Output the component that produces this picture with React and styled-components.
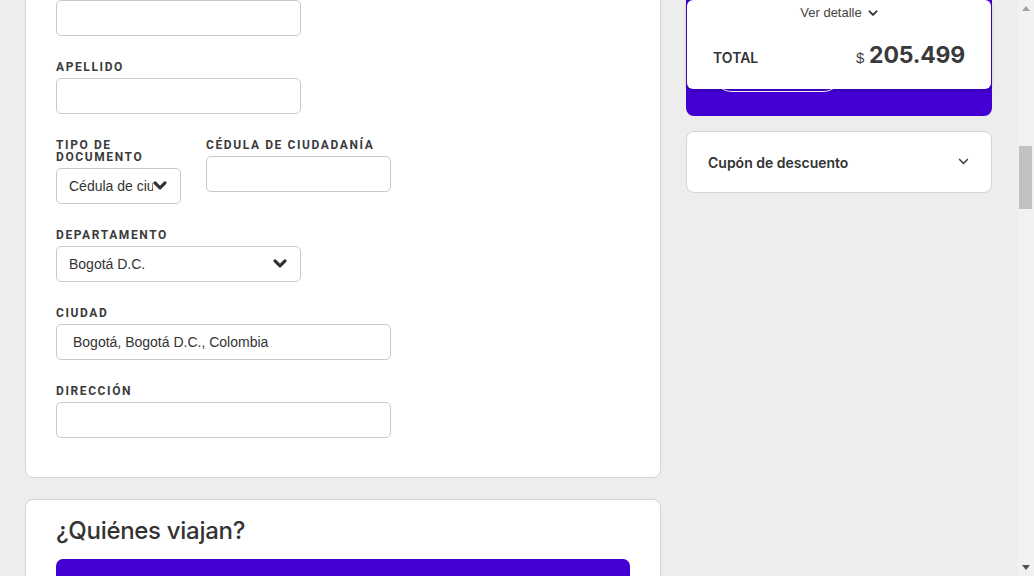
import React from "react";
import styled, { createGlobalStyle } from "styled-components";

const Global = createGlobalStyle`
  html, body { margin: 0; padding: 0; }
  body {
    background: #ededed;
    font-family: Inter, "Noto Sans", sans-serif;
    color: #333;
    overflow: hidden;
  }
`;

const Screen = styled.div`
  display: flex;
  height: 576px;
  overflow: hidden;
`;

const Viewport = styled.div`
  flex: 1;
  overflow: hidden;
`;

const Columns = styled.div`
  display: grid;
  grid-template-columns: 636px 306px;
  column-gap: 25px;
  padding: 0 25px;
  margin-top: -49px;
  align-items: start;
`;

const LeftColumn = styled.div`
  display: flex;
  flex-direction: column;
  gap: 21px;
`;

const Card = styled.section`
  background: #fff;
  border: 1px solid #d4d4d4;
  border-radius: 8px;
`;

const FormCard = styled(Card)`
  padding: 30px 30px 39px;
  display: flex;
  flex-direction: column;
  gap: 24px;
`;

const FieldRow = styled.div`
  display: flex;
  align-items: flex-start;
  gap: 25px;
`;

const Field = styled.div`
  width: ${(p) => p.$w}px;
  display: flex;
  flex-direction: column;
`;

const Label = styled.label`
  font-family: Roboto, "Liberation Sans", sans-serif;
  font-weight: 700;
  font-size: 12px;
  line-height: 12px;
  letter-spacing: 1.6px;
  color: #3b3b3b;
  padding-top: 1px;
  margin-bottom: 5px;
  text-transform: uppercase;
`;

const InputBox = styled.div`
  box-sizing: border-box;
  height: 36px;
  border: 1px solid #c9c9c9;
  border-radius: 5px;
  background: #fff;
  display: flex;
  align-items: center;
  padding: 0 ${(p) => (p.$select ? 13 : 16)}px 0 ${(p) => (p.$select ? 12 : 16)}px;
  font-family: "Liberation Sans", Arial, sans-serif;
  font-size: 14px;
  color: #333;
`;

const BoxText = styled.span`
  flex: 1;
  overflow: hidden;
  white-space: nowrap;
`;

const Chevron = ({ size = 14, stroke = 3.2, color = "#333" }) => (
  <svg width={size} height={size * 0.65} viewBox="0 0 14 9" fill="none">
    <polyline
      points="2,1.8 7,6.8 12,1.8"
      stroke={color}
      strokeWidth={stroke}
      strokeLinecap="round"
      strokeLinejoin="round"
    />
  </svg>
);

const TravelersCard = styled(Card)`
  padding: 17px 30px 0;
  height: 120px;
`;

const Heading = styled.h2`
  margin: 0 0 14px;
  font-family: Inter, "Noto Sans", sans-serif;
  font-weight: 500;
  font-size: 24px;
  line-height: 28px;
  letter-spacing: -0.3px;
  color: #333;
`;

const PurpleBar = styled.div`
  height: 60px;
  background: #4400d3;
  border-radius: 7px;
`;

const RightColumn = styled.aside`
  display: flex;
  flex-direction: column;
  gap: 15px;
`;

const PayCard = styled.div`
  background: #4400d3;
  border-radius: 8px;
  padding: 49px 1px 24px;
  display: flex;
  flex-direction: column;
`;

const Summary = styled.div`
  position: relative;
  z-index: 1;
  box-sizing: border-box;
  height: 89px;
  background: #fff;
  border-radius: 6px;
  box-shadow: 0 1px 4px rgba(0, 0, 0, 0.25);
  padding: 5px 26px 0;
  display: flex;
  flex-direction: column;
`;

const DetailToggle = styled.div`
  align-self: center;
  display: flex;
  align-items: center;
  gap: 6px;
  font-family: "Liberation Sans", Arial, sans-serif;
  font-size: 13px;
  line-height: 16px;
  color: #444;
`;

const TotalRow = styled.div`
  margin-top: 20px;
  display: flex;
  justify-content: space-between;
  align-items: baseline;
`;

const TotalLabel = styled.span`
  font-family: Inter, sans-serif;
  font-weight: 600;
  font-size: 14px;
  color: #333;
`;

const Amount = styled.span`
  font-family: Inter, sans-serif;
  font-weight: 700;
  font-size: 23px;
  color: #3a3a3a;
  letter-spacing: -0.2px;
`;

const Currency = styled.span`
  font-family: "Liberation Sans", Arial, sans-serif;
  font-weight: 400;
  font-size: 15px;
  margin-right: 5px;
  color: #444;
`;

const GhostButton = styled.div`
  box-sizing: border-box;
  margin: -37px 0 0 25px;
  width: 131px;
  height: 40px;
  border: 1px solid #fff;
  border-radius: 20px;
`;

const CouponCard = styled(Card)`
  box-sizing: border-box;
  height: 62px;
  padding: 0 22px 0 21px;
  display: flex;
  align-items: center;
  justify-content: space-between;
`;

const CouponTitle = styled.span`
  font-family: Inter, sans-serif;
  font-weight: 600;
  font-size: 14px;
  color: #333;
`;

const Scrollbar = styled.div`
  width: 17px;
  background: #f1f1f1;
  display: flex;
  flex-direction: column;
`;

const ScrollArrow = styled.div`
  height: 17px;
  display: flex;
  align-items: center;
  justify-content: center;
`;

const Track = styled.div`
  flex: 1;
  padding-top: 129px;
`;

const Thumb = styled.div`
  margin: 0 2px;
  height: 63px;
  background: #c1c1c1;
`;

const Tri = ({ up }) => (
  <svg width="8" height="5" viewBox="0 0 8 5">
    <polygon points={up ? "0,5 8,5 4,0" : "0,0 8,0 4,5"} fill={up ? "#a3a3a3" : "#505050"} />
  </svg>
);

function TextField({ label, width, value, select }) {
  return (
    <Field $w={width}>
      {label && <Label>{label}</Label>}
      <InputBox $select={select}>
        <BoxText>{value}</BoxText>
        {select && <Chevron />}
      </InputBox>
    </Field>
  );
}

const HiddenLabelSpace = styled.div`
  height: 18px;
`;

export default function App() {
  return (
    <>
      <Global />
      <Screen>
        <Viewport>
          <Columns>
            <LeftColumn>
              <FormCard>
                <Field $w={245}>
                  <HiddenLabelSpace aria-label="Nombre" />
                  <InputBox />
                </Field>
                <TextField label="Apellido" width={245} />
                <FieldRow>
                  <TextField label="Tipo de documento" width={125} value="Cédula de ciu" select />
                  <TextField label="Cédula de ciudadanía" width={185} />
                </FieldRow>
                <TextField label="Departamento" width={245} value="Bogotá D.C." select />
                <TextField label="Ciudad" width={335} value="Bogotá, Bogotá D.C., Colombia" />
                <TextField label="Dirección" width={335} />
              </FormCard>
              <TravelersCard>
                <Heading>¿Quiénes viajan?</Heading>
                <PurpleBar />
              </TravelersCard>
            </LeftColumn>
            <RightColumn>
              <PayCard>
                <Summary>
                  <DetailToggle>
                    Ver detalle
                    <Chevron size={10} stroke={2.6} />
                  </DetailToggle>
                  <TotalRow>
                    <TotalLabel>TOTAL</TotalLabel>
                    <Amount>
                      <Currency>$</Currency>205.499
                    </Amount>
                  </TotalRow>
                </Summary>
                <GhostButton />
              </PayCard>
              <CouponCard>
                <CouponTitle>Cupón de descuento</CouponTitle>
                <Chevron size={11} stroke={2} color="#444" />
              </CouponCard>
            </RightColumn>
          </Columns>
        </Viewport>
        <Scrollbar>
          <ScrollArrow>
            <Tri up />
          </ScrollArrow>
          <Track>
            <Thumb />
          </Track>
          <ScrollArrow>
            <Tri />
          </ScrollArrow>
        </Scrollbar>
      </Screen>
    </>
  );
}
